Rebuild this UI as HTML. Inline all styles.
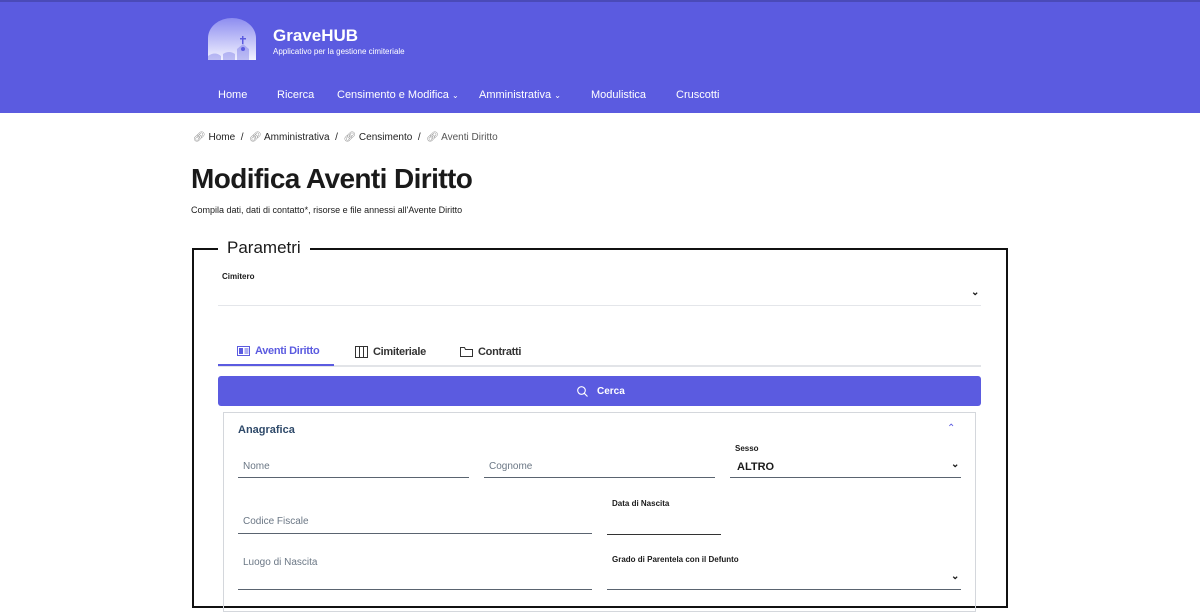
<!DOCTYPE html>
<html><head><meta charset="utf-8"><style>
*{box-sizing:border-box;margin:0;padding:0}
body{width:1200px;height:595px;overflow:hidden;background:#fff;font-family:"Liberation Sans",sans-serif;color:#1a1a1a;position:relative}
.abs{position:absolute;white-space:nowrap}
.hdr{position:absolute;left:0;top:0;width:1200px;height:113px;background:#5b5be0;border-top:2px solid #4a4ab8}
.nav{color:#fff;font-size:11px;top:89px}
.bc{font-size:10px;top:132px;color:#222}
.line{position:absolute;height:1px;background:#5a6470}
.ph{font-size:10px;color:#6b7785}
.lbl{font-size:8px;font-weight:bold}
</style></head><body>
<div class="hdr"></div>
<svg class="abs" style="left:207px;top:18px" width="50" height="42" viewBox="0 0 50 42">
<defs><linearGradient id="g" x1="0" y1="0" x2="0" y2="1"><stop offset="0" stop-color="#8d8df0"/><stop offset="1" stop-color="#f2f2ff"/></linearGradient></defs>
<path d="M1 42 V20 A24 20 0 0 1 49 20 V42 Z" fill="url(#g)"/>
<path d="M1 42 V38 Q8 33 14 38 V42 Z M16 42 V36 Q22 32 28 36 V42Z M30 42 V31 L36 26 L42 31 V42Z" fill="#5b5be0" opacity=".35"/>
<rect x="35" y="18" width="1.5" height="8" fill="#5b5be0"/><rect x="33" y="20" width="6" height="1.5" fill="#5b5be0"/>
<circle cx="36" cy="31" r="2" fill="#5b5be0"/>
</svg>
<div class="abs" style="left:273px;top:26px;color:#fff;font-size:17px;font-weight:bold">GraveHUB</div>
<div class="abs" style="left:273px;top:47px;color:#fff;font-size:8px">Applicativo per la gestione cimiteriale</div>
<div class="abs nav" style="left:218px">Home</div>
<div class="abs nav" style="left:277px">Ricerca</div>
<div class="abs nav" style="left:337px">Censimento e Modifica <span style="font-size:8px">⌄</span></div>
<div class="abs nav" style="left:479px">Amministrativa <span style="font-size:8px">⌄</span></div>
<div class="abs nav" style="left:591px">Modulistica</div>
<div class="abs nav" style="left:676px">Cruscotti</div>
<div class="abs bc" style="left:193px"><span style="color:#888">🔗︎</span> Home &nbsp;/&nbsp; <span style="color:#888">🔗︎</span> Amministrativa &nbsp;/&nbsp; <span style="color:#888">🔗︎</span> Censimento &nbsp;/&nbsp; <span style="color:#888">🔗︎</span> <span style="color:#555">Aventi Diritto</span></div>
<div class="abs" style="left:191px;top:163px;font-size:28px;font-weight:bold;letter-spacing:-0.6px">Modifica Aventi Diritto</div>
<div class="abs" style="left:191px;top:205px;font-size:9px">Compila dati, dati di contatto*, risorse e file annessi all'Avente Diritto</div>
<div style="position:absolute;left:192px;top:248px;width:816px;height:360px;border:2px solid #111"></div>
<div class="abs" style="left:218px;top:238px;background:#fff;padding:0 9px;font-size:17px;font-weight:500">Parametri</div>
<div class="abs lbl" style="left:222px;top:272px">Cimitero</div>
<div class="abs" style="left:971px;top:287px;font-size:10px;font-weight:bold">⌄</div>
<div class="line" style="left:218px;top:305px;width:763px;background:#e4e6ea"></div>
<svg class="abs" style="left:237px;top:346px" width="13" height="10"><rect x=".5" y=".5" width="12" height="9" fill="none" stroke="#5b5be0"/><rect x="2" y="2" width="4" height="6" fill="#5b5be0"/><path d="M7.5 3h4M7.5 5h4M7.5 7h4" stroke="#5b5be0"/></svg>
<div class="abs" style="left:255px;top:345px;font-size:11px;color:#5b5be0;font-weight:bold;letter-spacing:-0.3px">Aventi Diritto</div>
<svg class="abs" style="left:355px;top:346px" width="13" height="12"><rect x=".5" y=".5" width="12" height="11" fill="none" stroke="#333"/><path d="M4.5 0v12M8.5 0v12" stroke="#333"/></svg>
<div class="abs" style="left:373px;top:346px;font-size:11px;font-weight:bold;color:#333;letter-spacing:-0.3px">Cimiteriale</div>
<svg class="abs" style="left:460px;top:347px" width="13" height="10"><path d="M.5 9.5V.5h4l1 2h7v7z" fill="none" stroke="#333"/></svg>
<div class="abs" style="left:478px;top:346px;font-size:11px;font-weight:bold;color:#333;letter-spacing:-0.3px">Contratti</div>
<div class="line" style="left:218px;top:365px;width:763px;height:2px;background:#e2e4e8"></div>
<div class="line" style="left:218px;top:364px;width:116px;height:2px;background:#5b5be0"></div>
<div style="position:absolute;left:218px;top:376px;width:763px;height:30px;background:#5b5be0;border-radius:3px"></div>
<svg class="abs" style="left:577px;top:386px" width="11" height="11"><circle cx="4.5" cy="4.5" r="3.8" fill="none" stroke="#fff" stroke-width="1.1"/><path d="M7.3 7.3l3.2 3.2" stroke="#fff" stroke-width="1.1"/></svg>
<div class="abs" style="left:597px;top:386px;font-size:10px;color:#fff;font-weight:bold">Cerca</div>
<div style="position:absolute;left:223px;top:412px;width:753px;height:200px;border:1px solid #d4d7dc"></div>
<div class="abs" style="left:238px;top:424px;font-size:11px;color:#2f4a6a;font-weight:bold">Anagrafica</div>
<div class="abs" style="left:947px;top:423px;font-size:10px;color:#5b5be0">⌃</div>
<div class="abs ph" style="left:243px;top:461px">Nome</div>
<div class="line" style="left:238px;top:477px;width:231px"></div>
<div class="abs ph" style="left:489px;top:461px">Cognome</div>
<div class="line" style="left:484px;top:477px;width:231px"></div>
<div class="abs lbl" style="left:735px;top:444px">Sesso</div>
<div class="abs" style="left:737px;top:461px;font-size:11px;font-weight:bold">ALTRO</div>
<div class="abs" style="left:951px;top:459px;font-size:10px;font-weight:bold">⌄</div>
<div class="line" style="left:730px;top:477px;width:231px"></div>
<div class="abs ph" style="left:243px;top:516px">Codice Fiscale</div>
<div class="line" style="left:238px;top:533px;width:354px"></div>
<div class="abs lbl" style="left:612px;top:499px">Data di Nascita</div>
<div class="line" style="left:607px;top:534px;width:114px;background:#333"></div>
<div class="abs ph" style="left:243px;top:557px">Luogo di Nascita</div>
<div class="line" style="left:238px;top:589px;width:354px"></div>
<div class="abs lbl" style="left:612px;top:555px">Grado di Parentela con il Defunto</div>
<div class="abs" style="left:951px;top:571px;font-size:10px;font-weight:bold">⌄</div>
<div class="line" style="left:607px;top:589px;width:354px"></div>
</body></html>
